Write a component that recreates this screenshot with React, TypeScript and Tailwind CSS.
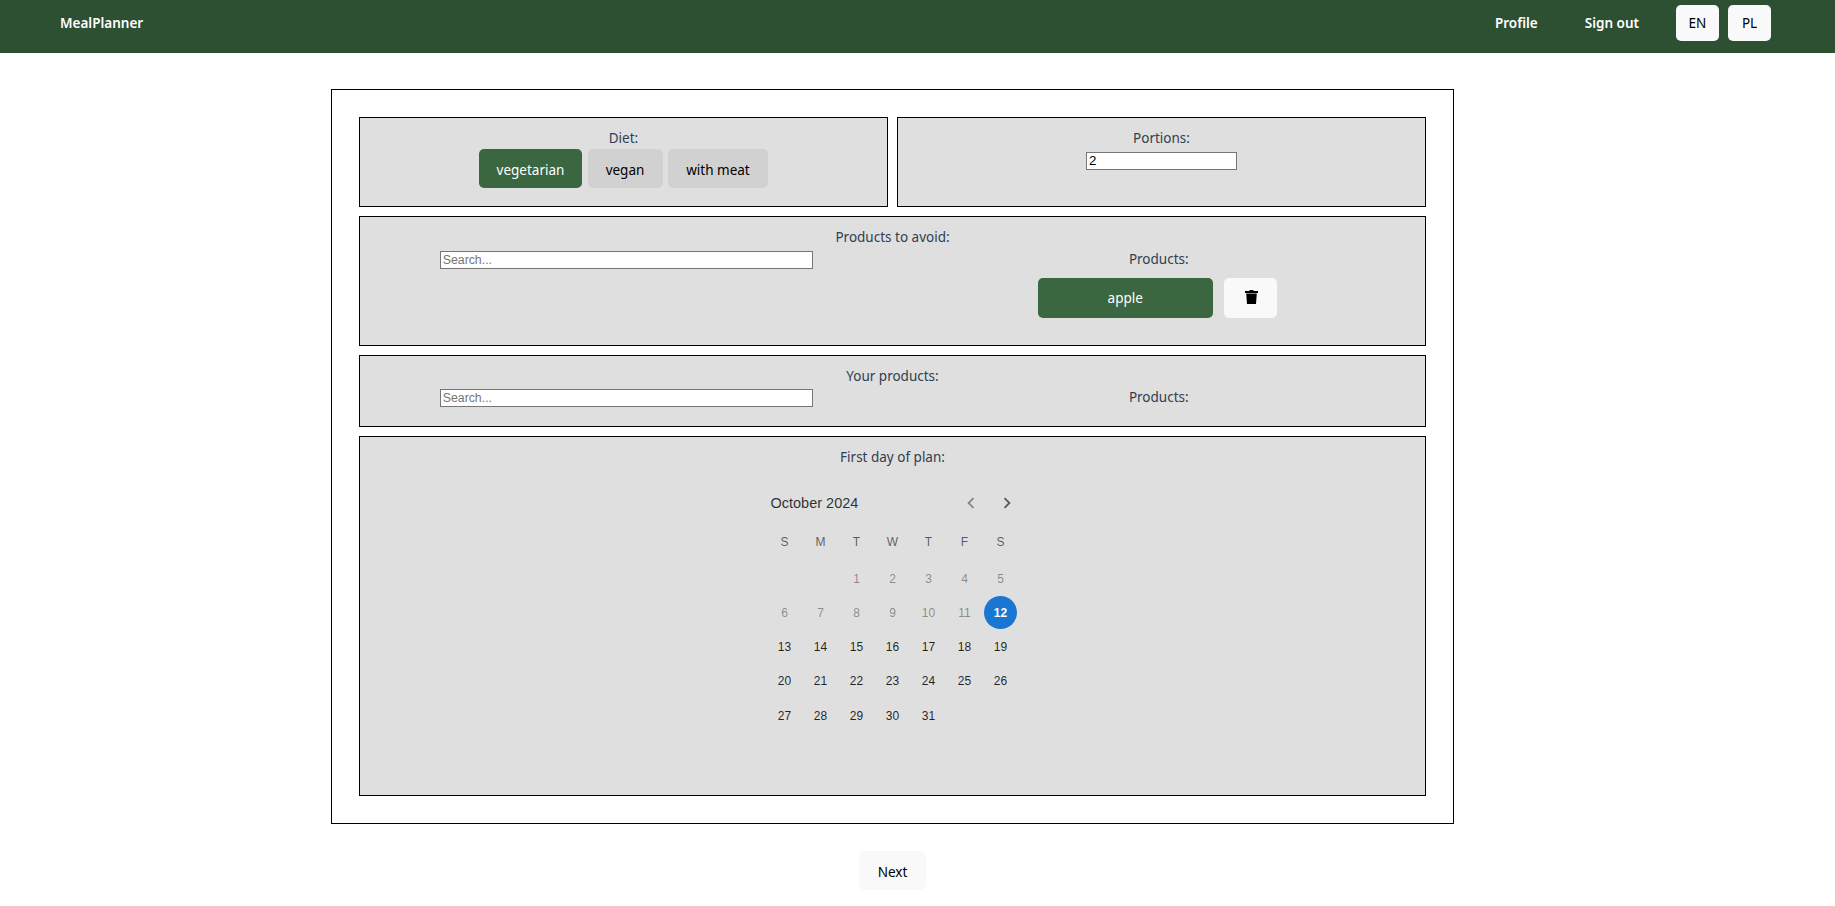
const weekDays = ["S", "M", "T", "W", "T", "F", "S"];
const blanks = [0, 1];
const days = Array.from({ length: 31 }, (_, i) => i + 1);

function Calendar() {
	return (
		<div className="w-[320px] mx-auto mt-[20px] font-['Liberation_Sans',Arial,sans-serif]">
			<div className="h-[30px] flex items-center justify-between pl-[38px] pr-[28px]">
				<span className="text-[14.5px] text-[rgba(0,0,0,0.8)]">October 2024</span>
				<div className="flex">
					<button className="w-9 h-[30px] flex items-center justify-center text-black/40">
						<svg width="22" height="22" viewBox="0 0 24 24" fill="currentColor">
							<path d="M15.41 7.41 14 6l-6 6 6 6 1.41-1.41L10.83 12z" />
						</svg>
					</button>
					<button className="w-9 h-[30px] flex items-center justify-center text-black/60">
						<svg width="22" height="22" viewBox="0 0 24 24" fill="currentColor">
							<path d="M10 6 8.59 7.41 13.17 12l-4.58 4.59L10 18l6-6z" />
						</svg>
					</button>
				</div>
			</div>
			<div className="w-[252px] mx-auto mt-[4px]">
				<div className="grid grid-cols-7 h-[40px] items-center text-center text-[12px] text-black/60">
					{weekDays.map((d, i) => (
						<span key={i}>{d}</span>
					))}
				</div>
				<div className="grid grid-cols-7 auto-rows-[34.25px] text-[12px] -mt-[0.5px]">
					{blanks.map((b) => (
						<span key={b} />
					))}
					{days.map((d) => (
						<div key={d} className="flex items-center justify-center">
							{d === 12 ? (
								<span className="w-[33px] h-[33px] rounded-full bg-[#1976d2] text-white font-bold flex items-center justify-center">
									{d}
								</span>
							) : (
								<span className={d < 12 ? "text-black/40" : "text-black/85"}>{d}</span>
							)}
						</div>
					))}
				</div>
			</div>
		</div>
	);
}

export default function App() {
	const panel = "border border-black bg-[#dfdfdf] pt-[9px] text-center";
	const input =
		"block border border-[#767676] bg-white h-[18px] px-[2px] text-black font-['Liberation_Sans',Arial,sans-serif] placeholder:text-[#757575] outline-none";

	return (
		<div className="min-h-[906px] bg-white text-[#2f4050] text-[13.5px] leading-[22px] font-['Noto_Sans',sans-serif]">
			{/* Navbar */}
			<nav className="h-[53px] bg-[#2d5033] flex items-start justify-between pt-[5px] pl-[60px] pr-[64px]">
				<span className="text-white font-semibold leading-[36px]">MealPlanner</span>
				<div className="flex items-center">
					<a className="text-white font-semibold mr-[47px]">Profile</a>
					<a className="text-white font-semibold mr-[37px]">Sign out</a>
					<button className="w-[43px] h-[36px] rounded-[5px] bg-[#f9f9f9] text-black mr-[9px]">EN</button>
					<button className="w-[43px] h-[36px] rounded-[5px] bg-[#f9f9f9] text-black">PL</button>
				</div>
			</nav>

			<div className="w-[1785px] flex flex-col items-center pt-[36px]">
				<div className="w-[1123px] border border-black p-[27px] flex flex-col gap-[9px]">
					<div className="grid grid-cols-2 gap-[9px]">
						{/* Diet */}
						<div className={`${panel} h-[90px]`}>
							<div>Diet:</div>
							<div className="flex justify-center gap-[5.5px]">
								<button className="h-[39px] w-[103px] pt-[2px] rounded-[5px] bg-[#3a6640] text-white">vegetarian</button>
								<button className="h-[39px] w-[75px] pt-[2px] rounded-[5px] bg-[#d1d1d1] text-black">vegan</button>
								<button className="h-[39px] w-[100px] pt-[2px] rounded-[5px] bg-[#d1d1d1] text-black">with meat</button>
							</div>
						</div>
						{/* Portions */}
						<div className={`${panel} h-[90px]`}>
							<div>Portions:</div>
							<input type="number" defaultValue={2} className={`${input} text-[13.333px] w-[151px] mx-auto mt-[3px]`} />
						</div>
					</div>

					{/* Products to avoid */}
					<div className={`${panel} h-[130px]`}>
						<div>Products to avoid:</div>
						<div className="grid grid-cols-2">
							<div>
								<input placeholder="Search..." className={`${input} text-[12.3px] w-[373px] mx-auto mt-[3px]`} />
							</div>
							<div>
								<div>Products:</div>
								<div className="flex justify-center gap-[11px] mt-[8px] pr-[3px]">
									<button className="h-[40px] w-[175px] rounded-[5px] bg-[#3a6640] text-white">apple</button>
									<button className="h-[40px] w-[53px] pb-[2px] pl-[2px] rounded-[5px] bg-[#f9f9f9] text-black flex items-center justify-center">
										<svg width="13" height="14" viewBox="0 0 13 14" fill="currentColor">
											<path d="M4.5 0h4v1h4.5v2H0V1h4.5zM1.2 3.6h10.6L11 14H2z" />
										</svg>
									</button>
								</div>
							</div>
						</div>
					</div>

					{/* Your products */}
					<div className={`${panel} h-[72px]`}>
						<div>Your products:</div>
						<div className="grid grid-cols-2">
							<div>
								<input placeholder="Search..." className={`${input} text-[12.3px] w-[373px] mx-auto mt-[2px]`} />
							</div>
							<div className="-mt-[1px]">Products:</div>
						</div>
					</div>

					{/* First day */}
					<div className={`${panel} h-[360px]`}>
						<div>First day of plan:</div>
						<Calendar />
					</div>
				</div>

				<button className="mt-[27px] h-[39px] w-[67px] pt-[2px] rounded-[6px] bg-[#f9f9f9] text-black">Next</button>
			</div>
		</div>
	);
}
